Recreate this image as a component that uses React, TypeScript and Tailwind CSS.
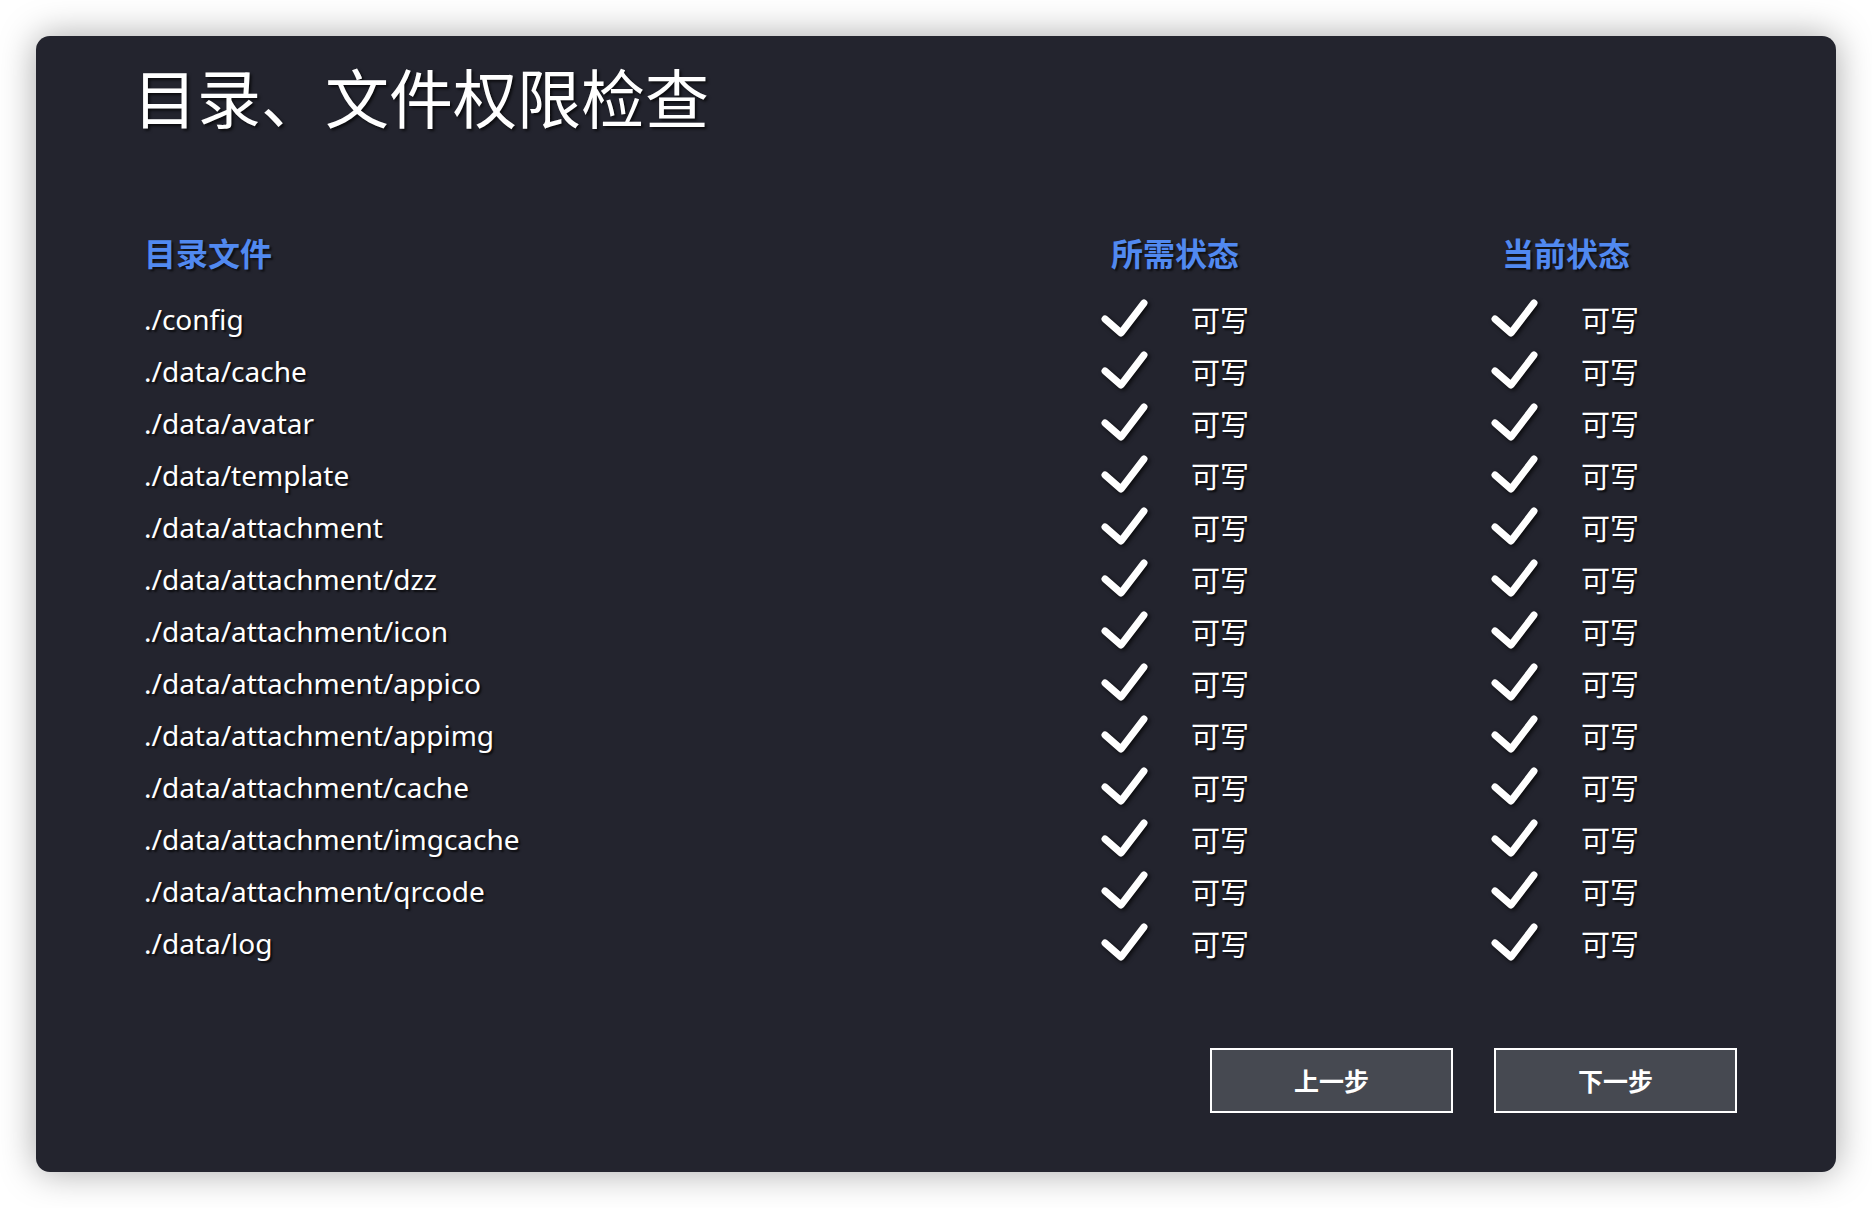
import React from "react";

const paths = [
  "./config",
  "./data/cache",
  "./data/avatar",
  "./data/template",
  "./data/attachment",
  "./data/attachment/dzz",
  "./data/attachment/icon",
  "./data/attachment/appico",
  "./data/attachment/appimg",
  "./data/attachment/cache",
  "./data/attachment/imgcache",
  "./data/attachment/qrcode",
  "./data/log",
];

const CJK = "font-['Noto_Sans_CJK_SC','Noto_Sans',sans-serif]";

function Check() {
  return (
    <svg width="48" height="42" viewBox="0 0 48 42" className="shrink-0 drop-shadow-[2px_2px_2px_rgba(0,0,0,0.7)]">
      <path d="M5 21 L21 35 L44 5" fill="none" stroke="#ffffff" strokeWidth="7" strokeLinecap="round" strokeLinejoin="round" />
    </svg>
  );
}

function Status() {
  return (
    <div className="flex items-center h-[52px]">
      <Check />
      <span className={`ml-[43px] text-[29px] leading-none text-white ${CJK} [text-shadow:2px_2px_2px_rgba(0,0,0,0.7)]`}>可写</span>
    </div>
  );
}

export default function App() {
  return (
    <div className="min-h-screen w-full bg-white p-[36px]">
      <div className="relative w-[1800px] h-[1136px] rounded-[14px] bg-[#23242e] shadow-[0_0_36px_rgba(0,0,0,0.35)] pt-[27px]">
        <h1 className={`ml-[97px] text-[64px] leading-none font-normal text-white ${CJK} [text-shadow:2px_2px_3px_rgba(0,0,0,0.7)]`}>
          目录、文件权限检查
        </h1>
        <div className="ml-[108px] mt-[99px] grid grid-cols-[956px_390px_auto]">
          <div className={`h-[52px] flex items-center text-[32px] font-bold text-[#5189f0] ${CJK} [text-shadow:2px_2px_2px_rgba(0,0,0,0.6)]`}>目录文件</div>
          <div className={`h-[52px] flex items-center pl-[11px] text-[32px] font-bold text-[#5189f0] ${CJK} [text-shadow:2px_2px_2px_rgba(0,0,0,0.6)]`}>所需状态</div>
          <div className={`h-[52px] flex items-center pl-[12px] text-[32px] font-bold text-[#5189f0] ${CJK} [text-shadow:2px_2px_2px_rgba(0,0,0,0.6)]`}>当前状态</div>
          <div className="col-span-3 h-[15px]" />
          {paths.map((p) => (
            <React.Fragment key={p}>
              <div className="h-[52px] flex items-center text-[28px] text-white font-['Noto_Sans',sans-serif] [text-shadow:2px_2px_2px_rgba(0,0,0,0.7)]">{p}</div>
              <Status />
              <Status />
            </React.Fragment>
          ))}
        </div>
        <div className="flex justify-end gap-[41px] mr-[99px] mt-[79px]">
          <button className={`w-[243px] h-[65px] border-2 border-white bg-[#464951] text-white text-[25px] font-bold ${CJK}`}>上一步</button>
          <button className={`w-[243px] h-[65px] border-2 border-white bg-[#464951] text-white text-[25px] font-bold ${CJK}`}>下一步</button>
        </div>
      </div>
    </div>
  );
}
